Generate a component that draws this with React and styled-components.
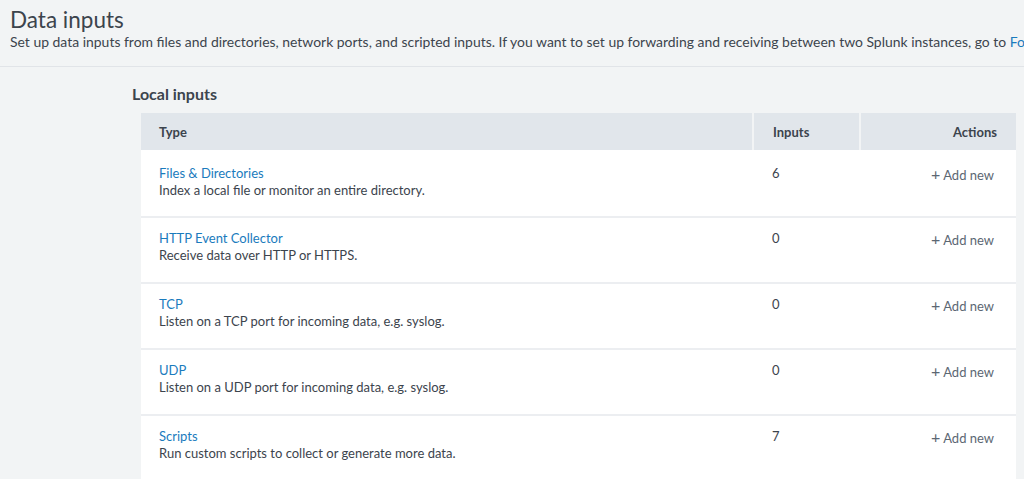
import React from 'react';
import styled, { createGlobalStyle } from 'styled-components';

const GlobalStyle = createGlobalStyle`
  html, body {
    margin: 0;
    padding: 0;
    background: #f2f4f5;
    font-family: Lato, "Open Sans", sans-serif;
    color: #3c444d;
    overflow: hidden;
  }
`;

const Page = styled.main`
  min-height: 479px;
  width: 1024px;
  overflow: hidden;
`;

const Header = styled.header`
  padding: 7px 10px 15px;
  border-bottom: 1px solid #e1e4e8;
  white-space: nowrap;
`;

const Title = styled.h1`
  margin: 0;
  font-size: 22.5px;
  font-weight: 400;
  line-height: 26px;
  color: #3c444d;
`;

const Subtitle = styled.p`
  margin: 0;
  font-size: 13.95px;
  line-height: 18px;
  color: #3c444d;
`;

const Link = styled.a`
  color: #1a7bbd;
  text-decoration: none;
`;

const Content = styled.section`
  padding: 17px 8px 0 132px;
`;

const SectionHeading = styled.h2`
  margin: 0 0 9px;
  font-size: 16px;
  font-weight: 700;
  line-height: 20px;
  color: #3c444d;
`;

const Table = styled.div`
  margin-left: 9px;
  display: grid;
  grid-template-columns: 611px 107px 1fr;
  background: #fff;
`;

const HeadCell = styled.div`
  background: #e1e6eb;
  height: 37px;
  display: flex;
  align-items: center;
  justify-content: ${p => (p.$right ? 'flex-end' : 'flex-start')};
  padding: 0 ${p => (p.$right ? '19px' : '18px')} 0 ${p => (p.$pad || 18)}px;
  font-size: 13px;
  font-weight: 700;
  border-left: ${p => (p.$divider ? '2px solid #f2f4f5' : 'none')};
`;

const Cell = styled.div`
  height: 66px;
  box-sizing: border-box;
  padding: ${p => (p.$first ? 15 : 12)}px ${p => (p.$right ? '22px' : '18px')} 0 ${p => (p.$pad || 18)}px;
  border-top: ${p => (p.$first ? 'none' : '2px solid #eceef1')};
  text-align: ${p => (p.$right ? 'right' : 'left')};
  font-size: 13px;
  line-height: 17px;
`;

const TypeName = styled(Link)`
  display: block;
`;

const Desc = styled.div`
  color: #3c444d;
`;

const AddNew = styled.span`
  color: #5c6773;
  &::before {
    content: '+';
    font-size: 16px;
    font-weight: 400;
    margin-right: 3px;
  }
`;

const rows = [
  { name: 'Files & Directories', desc: 'Index a local file or monitor an entire directory.', count: 6 },
  { name: 'HTTP Event Collector', desc: 'Receive data over HTTP or HTTPS.', count: 0 },
  { name: 'TCP', desc: 'Listen on a TCP port for incoming data, e.g. syslog.', count: 0 },
  { name: 'UDP', desc: 'Listen on a UDP port for incoming data, e.g. syslog.', count: 0 },
  { name: 'Scripts', desc: 'Run custom scripts to collect or generate more data.', count: 7 },
];

const App = () => (
  <Page>
    <GlobalStyle />
    <Header>
      <Title>Data inputs</Title>
      <Subtitle>
        Set up data inputs from files and directories, network ports, and scripted inputs. If you want to set up
        forwarding and receiving between two Splunk instances, go to <Link href="#">Forwarding and receiving</Link>.
      </Subtitle>
    </Header>
    <Content>
      <SectionHeading>Local inputs</SectionHeading>
      <Table>
        <HeadCell>Type</HeadCell>
        <HeadCell $divider $pad={19}>Inputs</HeadCell>
        <HeadCell $divider $right>Actions</HeadCell>
        {rows.map((r, i) => (
          <React.Fragment key={r.name}>
            <Cell $first={i === 0}>
              <TypeName href="#">{r.name}</TypeName>
              <Desc>{r.desc}</Desc>
            </Cell>
            <Cell $first={i === 0} $pad={20}>{r.count}</Cell>
            <Cell $first={i === 0} $right>
              <AddNew>Add new</AddNew>
            </Cell>
          </React.Fragment>
        ))}
      </Table>
    </Content>
  </Page>
);

export default App;
